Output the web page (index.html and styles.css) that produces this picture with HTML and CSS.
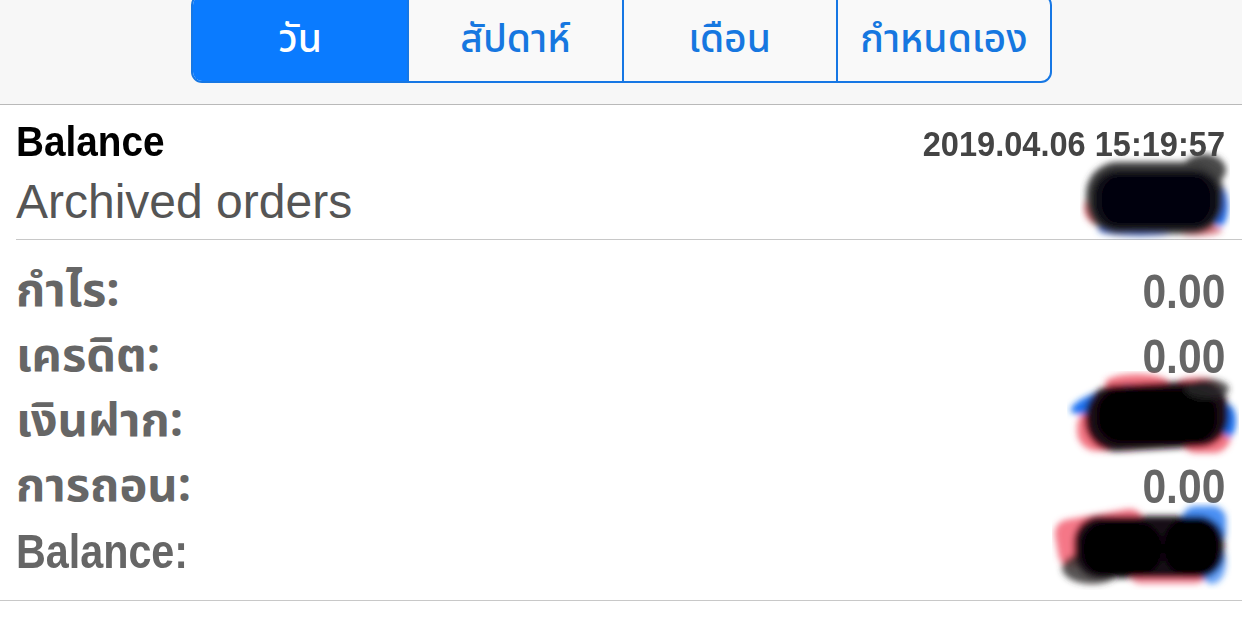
FILE: index.html
```html
<!DOCTYPE html>
<html lang="th">
<head>
<meta charset="utf-8">
<title>Balance</title>
<link rel="stylesheet" href="styles.css">
</head>
<body>
<div class="topbar">
  <div class="seg">
    <div class="seg-item active">วัน</div>
    <div class="seg-item">สัปดาห์</div>
    <div class="seg-item">เดือน</div>
    <div class="seg-item">กำหนดเอง</div>
  </div>
</div>

<div class="head">
  <div class="head-row1">
    <span class="title cond-l">Balance</span>
    <span class="date cond-r">2019.04.06 15:19:57</span>
  </div>
  <div class="head-row2">
    <span class="sub">Archived orders</span>
    <span class="redact-cell">
      <svg class="blob blob-head" width="150" height="90" viewBox="0 0 150 90">
        <defs><filter id="b1" x="-20%" y="-20%" width="140%" height="140%"><feGaussianBlur stdDeviation="3.2"/></filter></defs>
        <g filter="url(#b1)">
          <rect x="4" y="40" width="60" height="36" rx="18" fill="#d8303e" opacity="0.7"/>
          <ellipse cx="140" cy="56" rx="8" ry="20" fill="#1e6ef0"/>
          <ellipse cx="60" cy="80" rx="42" ry="6" fill="#1e5ed8" opacity="0.9"/>
          <ellipse cx="118" cy="80" rx="24" ry="6" fill="#c83040" opacity="0.6"/>
          <ellipse cx="124" cy="20" rx="22" ry="16" fill="#4a4a4a"/>
          <rect x="6" y="12" width="138" height="72" rx="32" fill="#3c3c3e"/>
          <rect x="12" y="20" width="128" height="60" rx="26" fill="#0e0a14"/>
          <rect x="22" y="26" width="108" height="48" rx="20" fill="#050208"/>
        </g>
      </svg>
    </span>
  </div>
</div>

<div class="rows">
  <div class="row"><span class="label thai">กำไร:</span><span class="value cond-r">0.00</span></div>
  <div class="row"><span class="label thai">เครดิต:</span><span class="value cond-r">0.00</span></div>
  <div class="row"><span class="label thai">เงินฝาก:</span>
    <span class="redact-cell">
      <svg class="blob blob-dep" width="172" height="90" viewBox="0 0 172 90">
        <defs><filter id="b2" x="-20%" y="-20%" width="140%" height="140%"><feGaussianBlur stdDeviation="3"/></filter></defs>
        <g filter="url(#b2)">
          <rect x="10" y="36" width="70" height="44" rx="20" fill="#ee3c50" opacity="0.7"/>
          <rect x="112" y="40" width="52" height="42" rx="18" fill="#ee3c50" opacity="0.7"/>
          <ellipse cx="70" cy="12" rx="32" ry="9" fill="#ee3c50" opacity="0.7"/>
          <ellipse cx="130" cy="14" rx="22" ry="8" fill="#ee3c50" opacity="0.6"/>
          <ellipse cx="40" cy="28" rx="38" ry="10" fill="#1f72f2" transform="rotate(-18 40 28)"/>
          <ellipse cx="162" cy="50" rx="7" ry="16" fill="#1f72f2"/>
          <rect x="18" y="12" width="144" height="66" rx="30" fill="#1a0a14" transform="rotate(-3 90 45)"/>
          <rect x="30" y="18" width="120" height="54" rx="24" fill="#050205"/>
          <ellipse cx="140" cy="18" rx="22" ry="10" fill="#2a2a2a" opacity="0.8"/>
        </g>
      </svg>
    </span>
  </div>
  <div class="row"><span class="label thai">การถอน:</span><span class="value cond-r">0.00</span></div>
  <div class="row"><span class="label latin cond-l">Balance:</span>
    <span class="redact-cell">
      <svg class="blob blob-bal" width="180" height="88" viewBox="0 0 180 88">
        <defs><filter id="b3" x="-20%" y="-20%" width="140%" height="140%"><feGaussianBlur stdDeviation="3"/></filter></defs>
        <g filter="url(#b3)">
          <rect x="4" y="12" width="90" height="48" rx="14" fill="#f24a60" opacity="0.75" transform="rotate(-10 49 36)"/>
          <rect x="130" y="4" width="44" height="40" rx="14" fill="#2a7cf2" opacity="0.85"/>
          <rect x="78" y="60" width="76" height="22" rx="10" fill="#f24a60" opacity="0.6"/>
          <ellipse cx="160" cy="60" rx="14" ry="22" fill="#2a7cf2" opacity="0.7"/>
          <ellipse cx="40" cy="66" rx="30" ry="16" fill="#3a3636" opacity="0.85"/>
          <rect x="22" y="14" width="150" height="62" rx="26" fill="#170a14"/>
          <rect x="30" y="20" width="80" height="54" rx="24" fill="#040204"/>
          <rect x="112" y="16" width="54" height="58" rx="24" fill="#060206"/>
        </g>
      </svg>
    </span>
  </div>
</div>
</body>
</html>
```

FILE: styles.css
```css
* { box-sizing: border-box; }
html, body { margin: 0; padding: 0; background: #ffffff; }
body { width: 1242px; height: 620px; overflow: hidden; }

.topbar {
  height: 105px;
  background: #f7f7f7;
  border-bottom: 1px solid #b9b9b9;
  overflow: hidden;
}
.seg {
  margin-left: 191px;
  margin-top: -6px;
  width: 861px;
  height: 89px;
  border: 2px solid #1677e4;
  border-radius: 11px;
  display: grid;
  grid-template-columns: 1fr 1fr 1fr 1fr;
  overflow: hidden;
  background: #f9f9f9;
}
.seg-item {
  display: flex;
  align-items: center;
  justify-content: center;
  padding-top: 4px;
  font-family: "Noto Sans Thai", "Noto Sans", sans-serif;
  font-size: 39px;
  font-weight: 500;
  color: #1677e0;
  border-left: 2px solid #1677e4;
}
.seg-item:first-child { border-left: none; }
.seg-item.active { background: #0a7bff; color: #ffffff; }

/* condensed look: scale a regular face horizontally */
.cond-l { display: inline-block; transform-origin: left center; }
.cond-r { display: inline-block; transform-origin: right center; }

.head {
  margin-left: 16px;
  padding: 10px 17px 8px 0;
  border-bottom: 1px solid #c8c8c8;
}
.head-row1 {
  display: flex;
  justify-content: space-between;
  align-items: baseline;
  height: 52px;
  line-height: 52px;
}
.title {
  font-family: "Liberation Sans", sans-serif;
  font-weight: 700;
  font-size: 43px;
  color: #000;
  transform: scaleX(0.9);
}
.date {
  font-family: "Liberation Sans", sans-serif;
  font-weight: 700;
  font-size: 35px;
  color: #444;
  transform: scaleX(0.93);
}
.head-row2 {
  margin-top: 6px;
  display: flex;
  justify-content: space-between;
  align-items: center;
  height: 58px;
  line-height: 58px;
}
.sub {
  font-family: "Liberation Sans", sans-serif;
  font-size: 48px;
  color: #555;
}

.redact-cell { position: relative; width: 1px; height: 1px; align-self: center; }
.blob { position: absolute; }
.blob-head { right: -5px; top: -52px; }
.blob-dep { right: -14px; top: -50px; }
.blob-bal { right: -7px; top: -49px; }

.rows {
  padding: 19px 17px 16px 16px;
  border-bottom: 1px solid #c8c8c8;
}
.row {
  display: flex;
  justify-content: space-between;
  align-items: center;
  height: 65px;
  line-height: 65px;
  font-weight: 700;
  color: #666;
}
.label.thai {
  font-family: "Noto Sans Thai", "Noto Sans", sans-serif;
  font-size: 47px;
}
.label.latin {
  font-family: "Liberation Sans", sans-serif;
  font-size: 48px;
  transform: scaleX(0.86);
}
.value {
  font-family: "Liberation Sans", sans-serif;
  font-size: 49px;
  transform: scaleX(0.87);
}
```
